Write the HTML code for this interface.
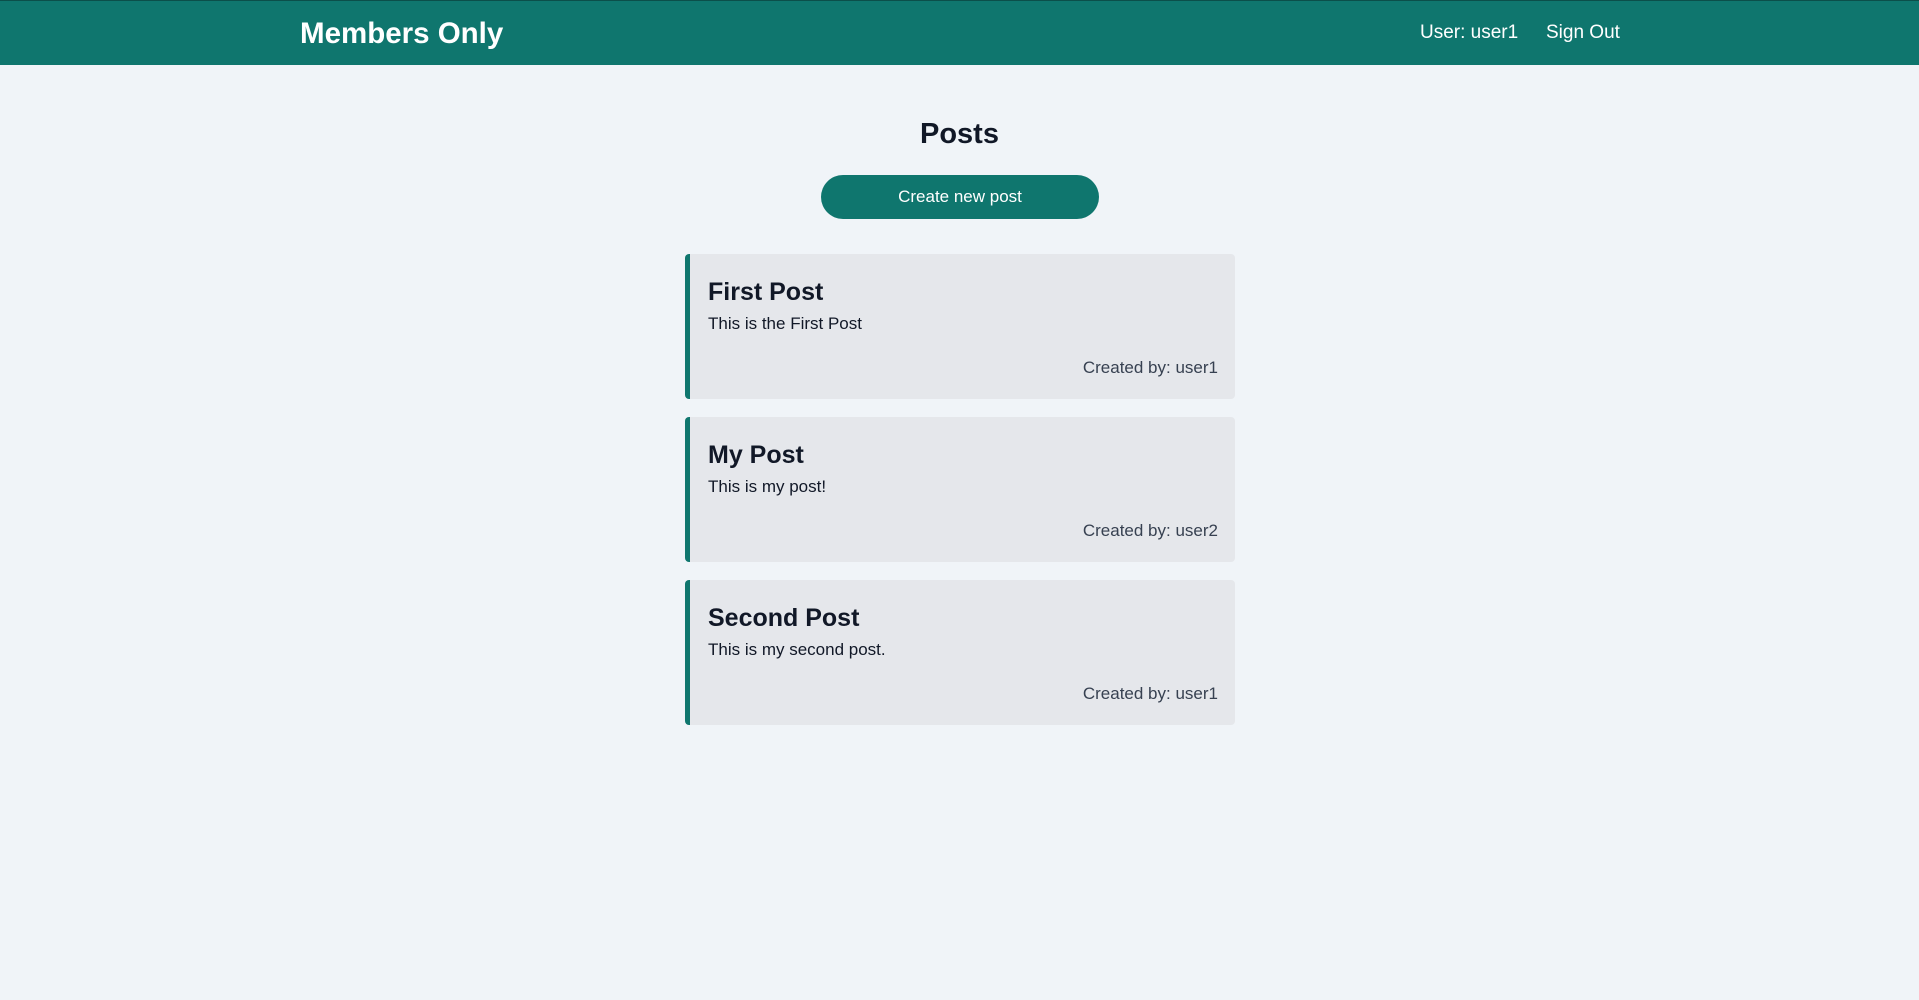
<!DOCTYPE html>
<html><head><meta charset="utf-8"><style>
*{box-sizing:border-box;margin:0;padding:0}
body{width:1919px;height:1000px;background:#f0f4f8;font-family:"Liberation Sans",sans-serif;color:#111827;position:relative;overflow:hidden}
header{height:65px;background:#0f766e;border-top:1px solid #0b4f4a;position:relative;color:#fff}
.logo{position:absolute;left:300px;top:16px;font-size:29.5px;font-weight:bold}
.nav{position:absolute;top:21px;font-size:19px}
h1{position:absolute;left:0;width:100%;text-align:center;top:118px;font-size:29px;font-weight:bold}
.btn{position:absolute;left:821px;top:175px;width:278px;height:44px;border-radius:22px;background:#0f766e;color:#fff;font-size:17px;text-align:center;line-height:44px}
.card{position:absolute;left:685px;width:550px;height:145px;background:#e5e7eb;border-left:5px solid #0f766e;border-radius:4px}
.card h2{position:absolute;left:18px;top:24px;font-size:25px;font-weight:bold}
.card p{position:absolute;left:18px;top:60px;font-size:17px}
.card .by{position:absolute;right:17px;top:104px;font-size:17px;color:#374151}
</style></head><body>
<header><div class="logo">Members Only</div><div class="nav" style="left:1420px">User: user1</div><div class="nav" style="left:1546px">Sign Out</div></header>
<h1>Posts</h1>
<div class="btn">Create new post</div>
<div class="card" style="top:254px"><h2>First Post</h2><p>This is the First Post</p><div class="by">Created by: user1</div></div>
<div class="card" style="top:417px"><h2>My Post</h2><p>This is my post!</p><div class="by">Created by: user2</div></div>
<div class="card" style="top:580px"><h2>Second Post</h2><p>This is my second post.</p><div class="by">Created by: user1</div></div>
</body></html>
